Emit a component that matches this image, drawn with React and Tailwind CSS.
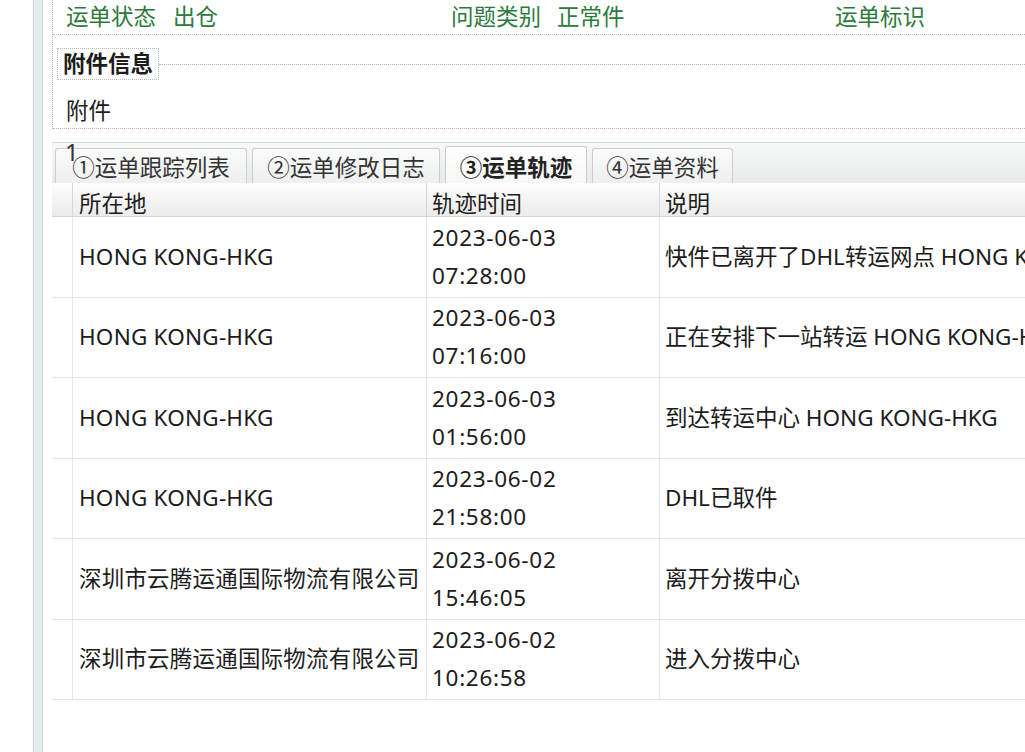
import React from 'react';

const TRACKS = [
  { place: 'HONG KONG-HKG', date: '2023-06-03', time: '07:28:00', note: '快件已离开了DHL转运网点 HONG KONG-HKG' },
  { place: 'HONG KONG-HKG', date: '2023-06-03', time: '07:16:00', note: '正在安排下一站转运 HONG KONG-HKG' },
  { place: 'HONG KONG-HKG', date: '2023-06-03', time: '01:56:00', note: '到达转运中心 HONG KONG-HKG' },
  { place: 'HONG KONG-HKG', date: '2023-06-02', time: '21:58:00', note: 'DHL已取件' },
  { place: '深圳市云腾运通国际物流有限公司', date: '2023-06-02', time: '15:46:05', note: '离开分拨中心' },
  { place: '深圳市云腾运通国际物流有限公司', date: '2023-06-02', time: '10:26:58', note: '进入分拨中心' },
];

const TABS = [
  { label: '①运单跟踪列表', w: 'w-[192px]' },
  { label: '②运单修改日志', w: 'w-[188px]' },
  { label: '③运单轨迹', w: 'w-[142px]', active: true },
  { label: '④运单资料', w: 'w-[141px]' },
];

const font = { fontFamily: '"Noto Sans", "Noto Sans CJK SC", sans-serif' };

export default function App() {
  return (
    <div style={font} className="flex h-[752px] w-[1025px] overflow-hidden bg-white text-[22.5px] text-[#1c1c1c]">
      {/* left frame strip */}
      <div className="w-[33px] shrink-0" />
      <div className="w-[10px] shrink-0 border-x border-[#cbd8db] bg-[#e3edef]" />
      <div className="w-[9px] shrink-0" />

      <div className="min-w-0 flex-1">
        {/* info block */}
        <div className="border-l border-dotted border-[#b9b9b9]">
          <div className="grid h-[35px] grid-cols-[385px_385px_1fr] items-center border-b border-dotted border-[#b9b9b9] text-[#2c7a3c]">
            <div className="flex gap-[17px] pl-[13px]"><span>运单状态</span><span>出仓</span></div>
            <div className="flex gap-[16px] pl-[13px]"><span>问题类别</span><span>正常件</span></div>
            <div className="pl-[12px]">运单标识</div>
          </div>
          <div className="flex h-[58px] items-center pl-[4px]">
            <div className="flex h-[32px] items-center border border-dotted border-[#b9b9b9] px-[5px] font-bold">附件信息</div>
            <div className="flex-1 border-t border-dotted border-[#b9b9b9]" />
          </div>
          <div className="flex h-[36px] items-start border-b border-dotted border-[#b9b9b9] pl-[13px] leading-[36px]">附件</div>
        </div>

        {/* tabs */}
        <div className="mt-[13px] flex h-[41px] items-end gap-[5px] border-t border-[#d3dcdf] bg-gradient-to-b from-[#f7f8f8] to-[#e9ebeb] pl-[3px]">
          {TABS.map((t, i) => (
            <div
              key={t.label}
              className={`relative flex ${t.w} items-end justify-center whitespace-nowrap rounded-t-[3px] border border-b-0 border-[#c9cfd1] ${
                t.active ? 'h-[37px] bg-gradient-to-b from-white to-[#f6f7f7] font-bold text-[#222]' : 'h-[35px] bg-gradient-to-b from-[#fbfbfb] to-[#eeefef] text-[#333]'
              } leading-[30px]`}
            >
              {i === 0 && <span className="absolute left-[9px] top-[-9px] text-[24px] leading-none">1</span>}
              {t.label}
            </div>
          ))}
        </div>

        {/* track table */}
        <div className="grid grid-cols-[21px_354px_233px_1fr]">
          <div className="h-[34px] border-b border-r border-[#d6d6d6] bg-gradient-to-b from-[#fdfdfd] to-[#ececec]" />
          <div className="flex h-[34px] items-center border-b border-r border-[#d6d6d6] bg-gradient-to-b from-[#fdfdfd] to-[#ececec] pl-[6px] pt-[8px]">所在地</div>
          <div className="flex h-[34px] items-center border-b border-r border-[#d6d6d6] bg-gradient-to-b from-[#fdfdfd] to-[#ececec] pl-[5px] pt-[8px]">轨迹时间</div>
          <div className="flex h-[34px] items-center border-b border-[#d6d6d6] bg-gradient-to-b from-[#fdfdfd] to-[#ececec] pl-[5px] pt-[8px]">说明</div>
          {TRACKS.map((r, i) => (
            <React.Fragment key={i}>
              <div className="h-[80.5px] border-b border-r border-[#e6e6e6]" />
              <div className="flex h-[80.5px] items-center whitespace-nowrap border-b border-r border-[#e6e6e6] pl-[6px] tracking-[0.2px]">{r.place}</div>
              <div className="flex h-[80.5px] flex-col justify-center border-b border-r border-[#e6e6e6] pl-[5px] leading-[38px] tracking-[0.7px]">
                <span>{r.date}</span>
                <span>{r.time}</span>
              </div>
              <div className="flex h-[80.5px] items-center overflow-hidden whitespace-nowrap border-b border-[#e6e6e6] pl-[5px]">{r.note}</div>
            </React.Fragment>
          ))}
        </div>
      </div>
    </div>
  );
}
